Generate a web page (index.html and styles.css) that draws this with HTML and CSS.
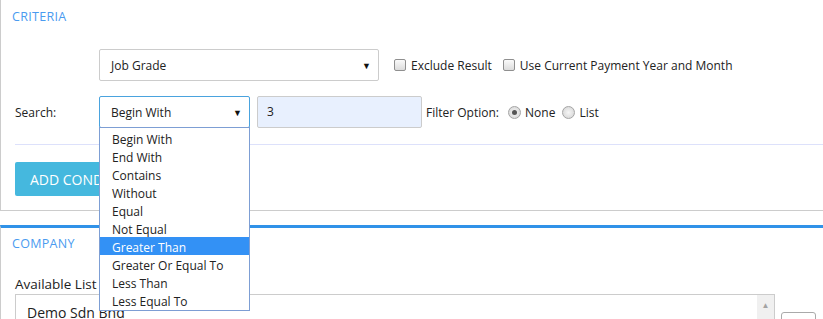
FILE: index.html
```html
<!DOCTYPE html>
<html lang="en">
<head>
  <meta charset="UTF-8">
  <meta name="viewport" content="width=device-width, initial-scale=1.0">
  <title>Criteria</title>
  <link rel="stylesheet" href="styles.css">
</head>
<body>
  <div class="panel criteria">
    <div class="panel-title">CRITERIA</div>
    <div class="form-row first-row">
      <span class="row-label"></span>
      <div class="select field-select">
        <span>Job Grade</span>
        <span class="arrow">&#9660;</span>
      </div>
      <label class="check"><span class="box"></span>Exclude Result</label>
      <label class="check"><span class="box"></span>Use Current Payment Year and Month</label>
    </div>
    <div class="form-row second-row">
      <span class="row-label">Search:</span>
      <div class="select-wrap">
        <div class="select mode-select focused">
          <span>Begin With</span>
          <span class="arrow">&#9660;</span>
        </div>
        <ul class="dropdown">
          <li>Begin With</li>
          <li>End With</li>
          <li>Contains</li>
          <li>Without</li>
          <li>Equal</li>
          <li>Not Equal</li>
          <li class="active">Greater Than</li>
          <li>Greater Or Equal To</li>
          <li>Less Than</li>
          <li>Less Equal To</li>
        </ul>
      </div>
      <div class="text-input">3</div>
      <span class="filter-label">Filter Option:</span>
      <label class="radio"><span class="dot checked"></span>None</label>
      <label class="radio"><span class="dot"></span>List</label>
    </div>
    <div class="separator"></div>
    <button class="add-condition">ADD CONDITION</button>
  </div>

  <div class="panel company">
    <div class="panel-title">COMPANY</div>
    <div class="list-label">Available List</div>
    <div class="list-row">
      <div class="listbox">
        <div class="list-item">Demo Sdn Bhd</div>
        <div class="scrollbar"><span class="up">&#9650;</span></div>
      </div>
      <button class="move-btn"></button>
    </div>
  </div>
</body>
</html>
```

FILE: styles.css
```css
body {
  margin: 0;
  padding: 0;
  font-family: "Open Sans", "Noto Sans", sans-serif;
  font-size: 12px;
  color: #222;
  background: #fff;
  overflow: hidden;
}
.panel {
  border-left: 1px solid #ccc;
}
.criteria {
  height: 211px;
  box-sizing: border-box;
  border-bottom: 1px solid #ccc;
}
.panel-title {
  color: #4a9bf0;
  font-size: 12.5px;
  letter-spacing: 0.3px;
  padding: 9px 11px 0;
  height: 18px;
  line-height: 16px;
}
.form-row {
  display: flex;
  align-items: center;
  padding-left: 14px;
}
.first-row {
  margin-top: 22px;
}
.second-row {
  margin-top: 15px;
}
.row-label {
  width: 84px;
  flex: none;
}
.select {
  display: flex;
  justify-content: space-between;
  align-items: center;
  box-sizing: border-box;
  height: 32px;
  padding: 0 7px 0 11px;
  border: 1px solid #ccc;
  border-radius: 2px;
  background: #fff;
}
.select .arrow {
  font-size: 9px;
  color: #111;
}
.field-select {
  width: 280px;
}
.check, .radio {
  display: flex;
  align-items: center;
  white-space: nowrap;
}
.check {
  margin-left: 15px;
}
.check + .check {
  margin-left: 11px;
}
.box {
  width: 10px;
  height: 10px;
  margin-right: 5px;
  border: 1px solid #8f8f8f;
  border-radius: 2px;
  background: linear-gradient(#fafafa, #dcdcdc);
}
.select-wrap {
  position: relative;
}
.mode-select {
  width: 151px;
  border-color: #4aa3de;
}
.dropdown {
  position: absolute;
  top: 31px;
  left: 0;
  width: 151px;
  box-sizing: border-box;
  margin: 0;
  padding: 1px 0 1px;
  list-style: none;
  background: #fff;
  border: 1px solid #7d9ed4;
  z-index: 5;
}
.dropdown li {
  height: 16px;
  padding: 2px 0 0 12px;
  line-height: 17px;
}
.dropdown li.active {
  background: #3391f5;
  color: #fff;
}
.text-input {
  box-sizing: border-box;
  width: 165px;
  height: 32px;
  margin-left: 7px;
  padding: 0 9px;
  line-height: 30px;
  border: 1px solid #ccc;
  border-radius: 2px;
  background: #e8f0fe;
}
.filter-label {
  margin-left: 4px;
}
.radio {
  margin-left: 9px;
}
.radio + .radio {
  margin-left: 7px;
}
.dot {
  width: 11px;
  height: 11px;
  margin-right: 4px;
  border: 1px solid #a5a5a5;
  border-radius: 50%;
  background: radial-gradient(#f6f6f6, #d2d2d2);
  display: flex;
  align-items: center;
  justify-content: center;
}
.dot.checked::after {
  content: "";
  width: 5px;
  height: 5px;
  border-radius: 50%;
  background: #555;
}
.separator {
  margin: 16px 0 0 14px;
  border-top: 1px solid #dde1fb;
}
.add-condition {
  margin: 17px 0 0 14px;
  height: 34px;
  padding: 0 15px;
  border: none;
  border-radius: 2px;
  background: #45b8de;
  color: #fff;
  font-family: "Open Sans", "Noto Sans", sans-serif;
  font-size: 14px;
}
.company {
  margin-top: 14px;
  border-top: 3px solid #3092e8;
  height: 120px;
}
.company .panel-title {
  padding-top: 8px;
}
.list-label {
  margin: 21px 0 0 14px;
  font-size: 13.5px;
  line-height: 19px;
}
.list-row {
  display: flex;
  align-items: flex-start;
  padding-left: 14px;
}
.listbox {
  display: flex;
  justify-content: space-between;
  width: 760px;
  height: 60px;
  box-sizing: border-box;
  border: 1px solid #ccc;
}
.list-item {
  padding: 8px 11px;
  font-size: 14px;
}
.scrollbar {
  width: 17px;
  background: #f0f0f0;
  text-align: center;
}
.up {
  font-size: 8px;
  color: #a3a3a3;
  line-height: 18px;
}
.move-btn {
  margin: 18px 0 0 6px;
  width: 35px;
  height: 30px;
  border: 1px solid #aaa;
  border-radius: 3px;
  background: #fff;
}
```
